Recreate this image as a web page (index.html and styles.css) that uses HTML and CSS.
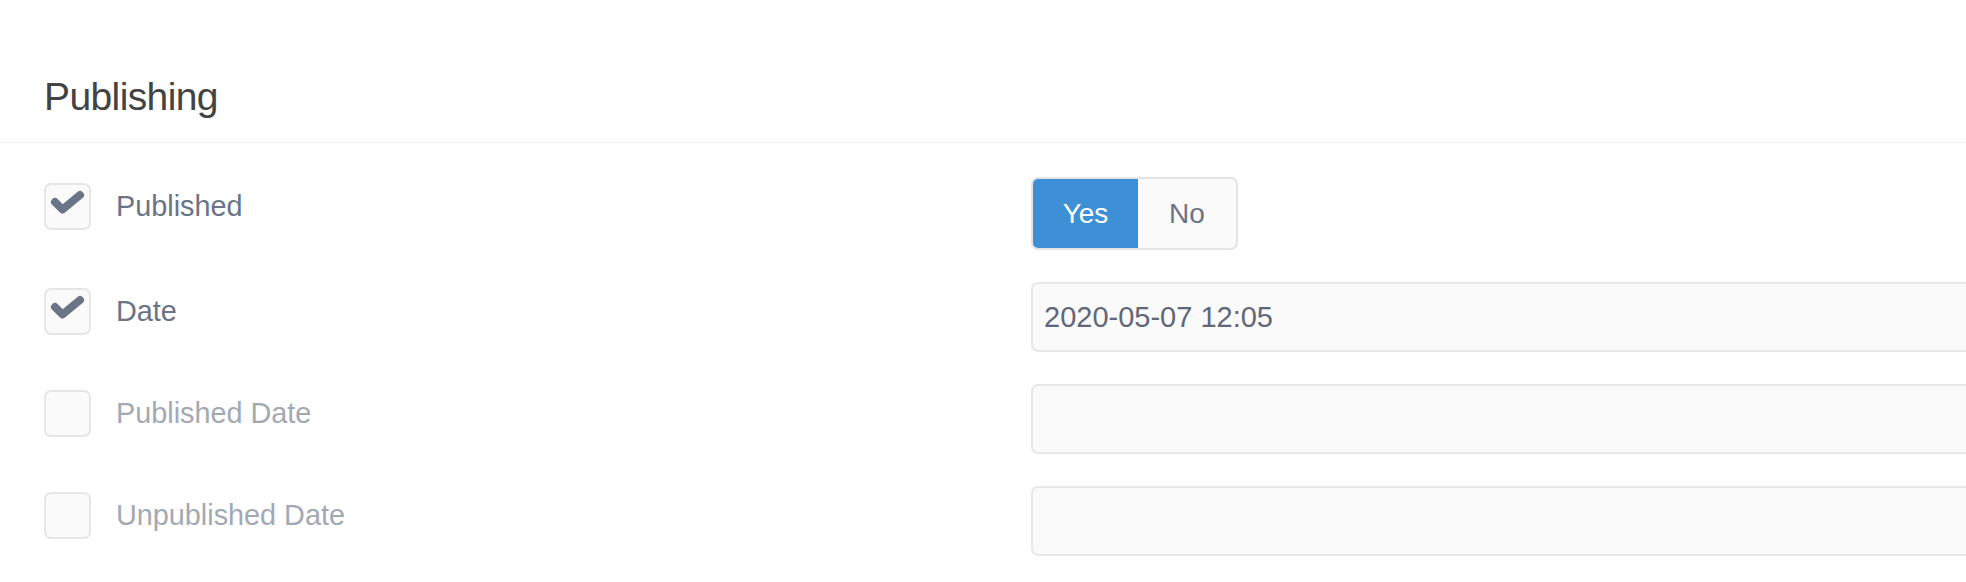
FILE: index.html
```html
<!DOCTYPE html>
<html lang="en">
<head>
<meta charset="utf-8">
<title>Publishing</title>
<link rel="stylesheet" href="styles.css">
</head>
<body>
<div class="panel">
  <div class="panel-header">
    <h2 class="panel-title">Publishing</h2>
  </div>
  <div class="panel-body">
    <div class="field-row">
      <div class="field-label">
        <span class="checkbox">
          <svg class="check" viewBox="0 0 43 43" width="43" height="43"><path d="M9 17 L16.5 24.5 L34 10" /></svg>
        </span>
        <span class="label-text">Published</span>
      </div>
      <div class="field-control">
        <div class="toggle">
          <span class="toggle-opt toggle-yes active">Yes</span>
          <span class="toggle-opt toggle-no">No</span>
        </div>
      </div>
    </div>
    <div class="field-row">
      <div class="field-label">
        <span class="checkbox">
          <svg class="check" viewBox="0 0 43 43" width="43" height="43"><path d="M9 17 L16.5 24.5 L34 10" /></svg>
        </span>
        <span class="label-text">Date</span>
      </div>
      <div class="field-control">
        <input class="text-input" type="text" value="2020-05-07 12:05">
      </div>
    </div>
    <div class="field-row is-off">
      <div class="field-label">
        <span class="checkbox"></span>
        <span class="label-text">Published Date</span>
      </div>
      <div class="field-control">
        <input class="text-input" type="text" value="">
      </div>
    </div>
    <div class="field-row is-off">
      <div class="field-label">
        <span class="checkbox"></span>
        <span class="label-text">Unpublished Date</span>
      </div>
      <div class="field-control">
        <input class="text-input" type="text" value="">
      </div>
    </div>
  </div>
</div>
</body>
</html>
```

FILE: styles.css
```css
html, body {
  margin: 0;
  padding: 0;
  background: #ffffff;
}

body {
  overflow: hidden;
  font-family: "Liberation Sans", Arial, Helvetica, sans-serif;
}

.panel-header {
  padding: 73px 44px 21px;
  border-bottom: 1px solid #f1f1f1;
}

.panel-title {
  margin: 0;
  font-size: 39px;
  line-height: 48px;
  font-weight: normal;
  color: #434343;
  letter-spacing: -0.6px;
}

.panel-body {
  padding: 34px 0 0 44px;
  margin-right: -30px;
}

.field-row {
  display: grid;
  grid-template-columns: 987px 1fr;
  margin-bottom: 32px;
}

.field-label {
  align-self: start;
  display: flex;
  align-items: center;
  gap: 25px;
  padding-top: 6px;
}

.checkbox {
  box-sizing: border-box;
  width: 47px;
  height: 47px;
  border: 2px solid #e6e6e6;
  border-radius: 7px;
  background: #fafafa;
  display: flex;
  align-items: center;
  justify-content: center;
}

.check path {
  fill: none;
  stroke: #6b7386;
  stroke-width: 8;
  stroke-linecap: round;
  stroke-linejoin: round;
}

.label-text {
  font-size: 28.8px;
  color: #6b7386;
}

.is-off .label-text {
  color: #a2a9b5;
}

.toggle {
  display: inline-flex;
  height: 73px;
  box-sizing: border-box;
  border: 2px solid #e4e4e4;
  border-radius: 7px;
  overflow: hidden;
  background: #fafafa;
}

.toggle-opt {
  display: flex;
  align-items: center;
  justify-content: center;
  font-size: 28px;
  color: #6b7386;
}

.toggle-yes {
  width: 105px;
}

.toggle-no {
  width: 98px;
}

.toggle-opt.active {
  background: #3d8fd6;
  color: #ffffff;
}

.text-input {
  display: block;
  box-sizing: border-box;
  width: 100%;
  height: 70px;
  margin: 0;
  border: 2px solid #e8e8e8;
  border-radius: 7px;
  background: #fafafa;
  padding: 0 11px;
  font-family: "Liberation Sans", Arial, Helvetica, sans-serif;
  font-size: 29px;
  color: #5f6778;
  outline: none;
}
```
